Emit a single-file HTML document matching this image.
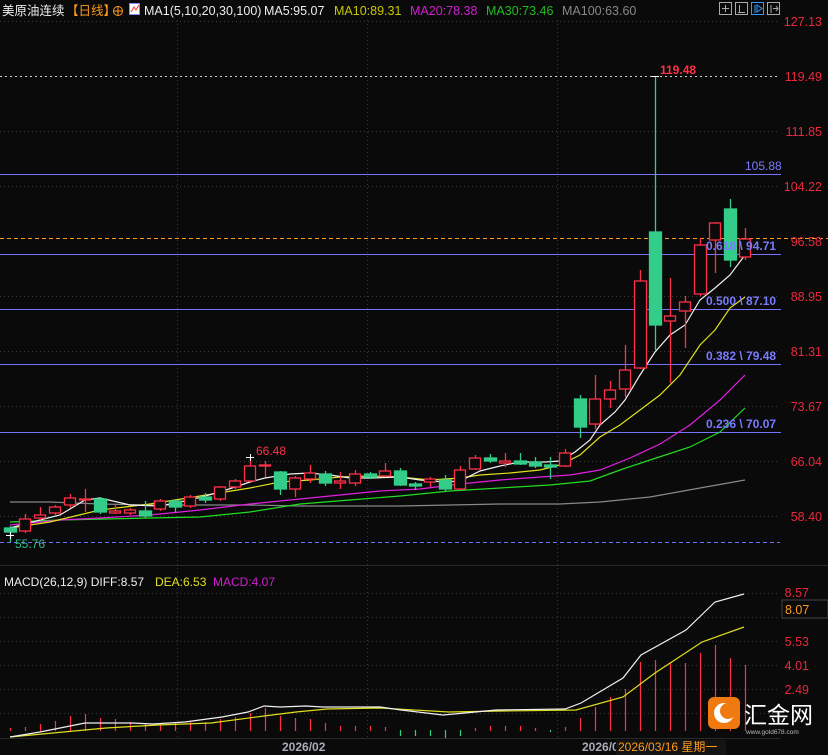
<!DOCTYPE html>
<html><head><meta charset="utf-8"><style>
html,body{margin:0;padding:0;background:#0a0a0a;}
svg{display:block;font-family:"Liberation Sans","Noto Sans CJK SC",sans-serif;}
</style></head><body>
<svg width="828" height="755" viewBox="0 0 828 755" xmlns="http://www.w3.org/2000/svg">
<rect width="828" height="755" fill="#0a0a0a"/>
<!-- grid -->
<g stroke="#3a3a3a" stroke-dasharray="1,3" stroke-width="1">
<line x1="0" y1="21.5" x2="780" y2="21.5"/><line x1="0" y1="131.5" x2="780" y2="131.5"/><line x1="0" y1="186.5" x2="780" y2="186.5"/><line x1="0" y1="296.5" x2="780" y2="296.5"/><line x1="0" y1="351.5" x2="780" y2="351.5"/><line x1="0" y1="406.5" x2="780" y2="406.5"/><line x1="0" y1="461.5" x2="780" y2="461.5"/><line x1="0" y1="516.5" x2="780" y2="516.5"/>
<line x1="0" y1="593.5" x2="780" y2="593.5"/><line x1="0" y1="617.5" x2="780" y2="617.5"/><line x1="0" y1="641.5" x2="780" y2="641.5"/><line x1="0" y1="665.5" x2="780" y2="665.5"/><line x1="0" y1="689.5" x2="780" y2="689.5"/><line x1="0" y1="713.5" x2="780" y2="713.5"/>
<line x1="177.5" y1="20" x2="177.5" y2="738"/><line x1="367.5" y1="20" x2="367.5" y2="738"/><line x1="557.5" y1="20" x2="557.5" y2="738"/>
</g>
<line x1="0" y1="565.5" x2="828" y2="565.5" stroke="#2a2a2a"/>
<line x1="0" y1="738.5" x2="780" y2="738.5" stroke="#2a2a2a"/>
<!-- special lines -->
<line x1="0" y1="76.5" x2="780" y2="76.5" stroke="#cccccc" stroke-dasharray="2,3"/>
<line x1="0" y1="238.5" x2="828" y2="238.5" stroke="#ff9a1a" stroke-dasharray="4,3"/>
<line x1="0" y1="542.5" x2="780" y2="542.5" stroke="#7070ff" stroke-dasharray="4,3"/>
<g stroke="#7474ff" stroke-width="1">
<line x1="0" y1="174.5" x2="781" y2="174.5"/><line x1="0" y1="254.5" x2="781" y2="254.5"/><line x1="0" y1="309.5" x2="781" y2="309.5"/><line x1="0" y1="364.5" x2="781" y2="364.5"/><line x1="0" y1="432.5" x2="781" y2="432.5"/>
</g>
<!-- MA lines -->
<g fill="none" stroke-width="1.2">
<polyline stroke="#888" points="10,502 50,502 100,504 150,505 250,505 300,506 400,506 500,504 560,504 600,502 650,497 700,488 745,480"/>
<polyline stroke="#22dd22" points="10,522 60,520 150,518 200,517 250,512 300,504 350,500 400,496 450,491 500,488 550,485 590,481 620,470 650,460 690,447 720,432 745,408"/>
<polyline stroke="#e020e0" points="10,525 60,520 100,518 150,515 200,510 250,504 290,500 340,495 380,491 420,489 460,484 500,480 540,477 570,475 600,470 630,458 660,444 690,425 720,400 745,375"/>
<polyline stroke="#e0e020" points="10,528 50,522 100,510 150,504 200,496 250,488 280,482 310,480 340,477 370,476 400,477 430,480 460,478 480,475 510,473 540,470 560,465 580,455 600,437 620,425 640,410 660,395 680,375 700,345 715,330 730,308 745,297"/>
<polyline stroke="#f0f0f0" points="10,528 40,520 60,515 85,500 100,498 130,505 160,506 190,500 220,492 250,482 265,478 290,474 310,473 330,475 350,478 370,478 400,477 420,480 445,482 460,481 480,471 500,466 520,462 545,462 560,461 575,452 590,440 600,425 615,412 625,400 640,375 655,352 670,335 685,325 700,300 715,288 730,275 745,255"/>
</g>
<!-- candles -->
<g stroke-width="1.3">
<g stroke="#3c8" fill="#3c8">
<line x1="10.5" y1="526" x2="10.5" y2="542"/><rect x="4.5" y="528" width="12" height="4"/>
<line x1="100.5" y1="497" x2="100.5" y2="514"/><rect x="94.5" y="499" width="12" height="13"/>
<line x1="145.5" y1="501" x2="145.5" y2="518"/><rect x="139.5" y="511" width="12" height="5"/>
<line x1="175.5" y1="499" x2="175.5" y2="512"/><rect x="169.5" y="501" width="12" height="6"/>
<line x1="205.5" y1="493" x2="205.5" y2="503"/><rect x="199.5" y="497" width="12" height="3"/>
<line x1="280.5" y1="471" x2="280.5" y2="495"/><rect x="274.5" y="472" width="12" height="17"/>
<line x1="325.5" y1="471" x2="325.5" y2="486"/><rect x="319.5" y="474" width="12" height="9"/>
<line x1="370.5" y1="472" x2="370.5" y2="479"/><rect x="364.5" y="474" width="12" height="3"/>
<line x1="400.5" y1="468" x2="400.5" y2="486"/><rect x="394.5" y="471" width="12" height="14"/>
<line x1="415.5" y1="482" x2="415.5" y2="490"/><rect x="409.5" y="484" width="12" height="2"/>
<line x1="445.5" y1="475" x2="445.5" y2="492"/><rect x="439.5" y="480" width="12" height="9"/>
<line x1="490.5" y1="454" x2="490.5" y2="463"/><rect x="484.5" y="458" width="12" height="3"/>
<line x1="520.5" y1="453" x2="520.5" y2="465"/><rect x="514.5" y="461" width="12" height="3"/>
<line x1="535.5" y1="457" x2="535.5" y2="468"/><rect x="529.5" y="462" width="12" height="4"/>
<line x1="550.5" y1="457" x2="550.5" y2="479"/><rect x="544.5" y="465" width="12" height="2"/>
<line x1="580.5" y1="395" x2="580.5" y2="438"/><rect x="574.5" y="399" width="12" height="28"/>
<line x1="655.5" y1="76" x2="655.5" y2="350"/><rect x="649.5" y="232" width="12" height="93"/>
<line x1="730.5" y1="199" x2="730.5" y2="267"/><rect x="724.5" y="209" width="12" height="51"/>
</g>
<g stroke="#ff3048" fill="#0a0a0a">
<line x1="25.5" y1="514" x2="25.5" y2="533"/><rect x="19.5" y="519" width="11" height="12"/>
<line x1="40.5" y1="507" x2="40.5" y2="520"/><rect x="34.5" y="515" width="11" height="3"/>
<line x1="55.5" y1="505" x2="55.5" y2="515"/><rect x="49.5" y="507" width="11" height="6"/>
<line x1="70.5" y1="494" x2="70.5" y2="508"/><rect x="64.5" y="498" width="11" height="7"/>
<line x1="85.5" y1="489" x2="85.5" y2="512"/><rect x="79.5" y="499" width="11" height="1"/>
<line x1="115.5" y1="505" x2="115.5" y2="514"/><rect x="109.5" y="511" width="11" height="2"/>
<line x1="130.5" y1="508" x2="130.5" y2="515"/><rect x="124.5" y="510" width="11" height="3"/>
<line x1="160.5" y1="499" x2="160.5" y2="511"/><rect x="154.5" y="501" width="11" height="8"/>
<line x1="190.5" y1="495" x2="190.5" y2="508"/><rect x="184.5" y="497" width="11" height="9"/>
<line x1="220.5" y1="486" x2="220.5" y2="501"/><rect x="214.5" y="487" width="11" height="12"/>
<line x1="235.5" y1="479" x2="235.5" y2="489"/><rect x="229.5" y="481" width="11" height="6"/>
<line x1="250.5" y1="457" x2="250.5" y2="482"/><rect x="244.5" y="466" width="11" height="15"/>
<line x1="265.5" y1="461" x2="265.5" y2="477"/><rect x="259.5" y="465" width="11" height="1"/>
<line x1="295.5" y1="476" x2="295.5" y2="497"/><rect x="289.5" y="478" width="11" height="11"/>
<line x1="310.5" y1="465" x2="310.5" y2="483"/><rect x="304.5" y="473" width="11" height="6"/>
<line x1="340.5" y1="472" x2="340.5" y2="489"/><rect x="334.5" y="481" width="11" height="2"/>
<line x1="355.5" y1="470" x2="355.5" y2="486"/><rect x="349.5" y="474" width="11" height="9"/>
<line x1="385.5" y1="463" x2="385.5" y2="477"/><rect x="379.5" y="471" width="11" height="5"/>
<line x1="430.5" y1="477" x2="430.5" y2="487"/><rect x="424.5" y="479" width="11" height="3"/>
<line x1="460.5" y1="466" x2="460.5" y2="490"/><rect x="454.5" y="470" width="11" height="19"/>
<line x1="475.5" y1="455" x2="475.5" y2="470"/><rect x="469.5" y="458" width="11" height="11"/>
<line x1="505.5" y1="453" x2="505.5" y2="467"/><rect x="499.5" y="461" width="11" height="2"/>
<line x1="565.5" y1="449" x2="565.5" y2="467"/><rect x="559.5" y="453" width="11" height="13"/>
<line x1="595.5" y1="375" x2="595.5" y2="429"/><rect x="589.5" y="399" width="11" height="25"/>
<line x1="610.5" y1="381" x2="610.5" y2="408"/><rect x="604.5" y="390" width="11" height="9"/>
<line x1="625.5" y1="345" x2="625.5" y2="397"/><rect x="619.5" y="370" width="11" height="19"/>
<line x1="640.5" y1="270" x2="640.5" y2="369"/><rect x="634.5" y="281" width="12" height="87"/>
<line x1="670.5" y1="278" x2="670.5" y2="383"/><rect x="664.5" y="316" width="11" height="5"/>
<line x1="685.5" y1="296" x2="685.5" y2="348"/><rect x="679.5" y="302" width="11" height="9"/>
<line x1="700.5" y1="238" x2="700.5" y2="296"/><rect x="694.5" y="245" width="12" height="49"/>
<line x1="715.5" y1="222" x2="715.5" y2="273"/><rect x="709.5" y="223" width="11" height="17"/>
<line x1="745.5" y1="228" x2="745.5" y2="260"/><rect x="739.5" y="239" width="11" height="18"/>
</g>
</g>
<!-- markers -->
<g stroke="#fff"><line x1="246" y1="457.5" x2="254" y2="457.5"/><line x1="250.5" y1="454" x2="250.5" y2="461"/><line x1="6" y1="535.5" x2="14" y2="535.5"/><line x1="10.5" y1="532" x2="10.5" y2="539"/><line x1="652" y1="76.5" x2="659" y2="76.5"/></g>
<text x="256" y="455" fill="#ff3048" font-size="12">66.48</text>
<text x="15" y="548" fill="#33bb88" font-size="12">55.76</text>
<text x="660" y="74" fill="#ff3048" font-size="12" font-weight="bold">119.48</text>
<g fill="#7a7aff" font-size="12" font-weight="bold">
<text x="706" y="250">0.618 \ 94.71</text><text x="706" y="305">0.500 \ 87.10</text><text x="706" y="360">0.382 \ 79.48</text><text x="706" y="428">0.236 \ 70.07</text>
</g>
<text x="745" y="170" fill="#7a7aff" font-size="12">105.88</text>
<!-- right axis -->
<g fill="#e8283c" font-size="12.5" text-anchor="end">
<text x="822" y="26">127.13</text><text x="822" y="81">119.49</text><text x="822" y="136">111.85</text><text x="822" y="191">104.22</text><text x="822" y="246">96.58</text><text x="822" y="301">88.95</text><text x="822" y="356">81.31</text><text x="822" y="411">73.67</text><text x="822" y="466">66.04</text><text x="822" y="521">58.40</text>
<text x="809" y="597">8.57</text><text x="809" y="646">5.53</text><text x="809" y="670">4.01</text><text x="809" y="694">2.49</text>
</g>
<rect x="782" y="600" width="46" height="18" fill="#0a0a0a" stroke="#444"/>
<text x="785" y="614" fill="#ff9a1a" font-size="12.5">8.07</text>
<!-- header -->
<g font-size="12.5">
<text x="2" y="15" fill="#eee">美原油连续</text>
<text x="66" y="15" fill="#ff9a1a">【日线】</text>
<circle cx="118" cy="11" r="4.5" fill="none" stroke="#ff9a1a"/><line x1="113" y1="11" x2="123" y2="11" stroke="#ff9a1a"/><line x1="118" y1="6" x2="118" y2="16" stroke="#ff9a1a"/>
<rect x="129.5" y="3.5" width="10" height="11" fill="#fff" stroke="#88f"/><polyline points="131,12 134,7 136,10 139,5" fill="none" stroke="#f33"/>
<text x="144" y="15" fill="#eee">MA1(5,10,20,30,100)</text>
<text x="264" y="15" fill="#eee">MA5:95.07</text>
<text x="334" y="15" fill="#c8c800">MA10:89.31</text>
<text x="410" y="15" fill="#d020d0">MA20:78.38</text>
<text x="486" y="15" fill="#22bb22">MA30:73.46</text>
<text x="562" y="15" fill="#888">MA100:63.60</text>
</g>
<g fill="none" stroke="#aaa">
<rect x="719.5" y="2.5" width="12" height="12"/><rect x="735.5" y="2.5" width="12" height="12"/><rect x="751.5" y="2.5" width="12" height="12" stroke="#39f"/><rect x="767.5" y="2.5" width="12" height="12"/>
<line x1="725.5" y1="5" x2="725.5" y2="12"/><line x1="722" y1="8.5" x2="729" y2="8.5"/>
<line x1="739.5" y1="5" x2="739.5" y2="12"/><line x1="738" y1="12.5" x2="745" y2="12.5"/>
<path d="M755 5v8M757 5l5 3.5-5 3.5z" stroke="#39f"/>
<path d="M771 5v8M773 8.5h5M776 6l2 2.5-2 2.5"/>
</g>
<!-- MACD -->
<g font-size="12">
<text x="4" y="586" fill="#eee">MACD(26,12,9) DIFF:8.57</text>
<text x="155" y="586" fill="#e0e020">DEA:6.53</text>
<text x="213" y="586" fill="#d020d0">MACD:4.07</text>
</g>
<g stroke="#ff3048" stroke-width="1.2">
<line x1="10.5" y1="731" x2="10.5" y2="728"/><line x1="25.5" y1="731" x2="25.5" y2="727"/><line x1="40.5" y1="731" x2="40.5" y2="724"/><line x1="55.5" y1="731" x2="55.5" y2="721"/><line x1="70.5" y1="731" x2="70.5" y2="716"/><line x1="85.5" y1="731" x2="85.5" y2="714"/><line x1="100.5" y1="731" x2="100.5" y2="718"/><line x1="115.5" y1="731" x2="115.5" y2="719"/><line x1="130.5" y1="731" x2="130.5" y2="722"/><line x1="145.5" y1="731" x2="145.5" y2="723"/><line x1="160.5" y1="731" x2="160.5" y2="723"/><line x1="175.5" y1="731" x2="175.5" y2="723"/><line x1="190.5" y1="731" x2="190.5" y2="722"/><line x1="205.5" y1="731" x2="205.5" y2="722"/><line x1="220.5" y1="731" x2="220.5" y2="719"/><line x1="235.5" y1="731" x2="235.5" y2="717"/><line x1="250.5" y1="731" x2="250.5" y2="713"/><line x1="265.5" y1="731" x2="265.5" y2="708"/><line x1="280.5" y1="731" x2="280.5" y2="716"/><line x1="295.5" y1="731" x2="295.5" y2="718"/><line x1="310.5" y1="731" x2="310.5" y2="719"/><line x1="325.5" y1="731" x2="325.5" y2="723"/><line x1="340.5" y1="731" x2="340.5" y2="726"/><line x1="355.5" y1="731" x2="355.5" y2="726"/><line x1="370.5" y1="731" x2="370.5" y2="726"/><line x1="385.5" y1="731" x2="385.5" y2="727"/>
<line x1="475.5" y1="731" x2="475.5" y2="728"/><line x1="490.5" y1="731" x2="490.5" y2="726"/><line x1="505.5" y1="731" x2="505.5" y2="726"/><line x1="520.5" y1="731" x2="520.5" y2="726"/><line x1="535.5" y1="731" x2="535.5" y2="728"/><line x1="565.5" y1="731" x2="565.5" y2="727"/>
<line x1="580.5" y1="731" x2="580.5" y2="718"/><line x1="595.5" y1="731" x2="595.5" y2="707"/><line x1="610.5" y1="731" x2="610.5" y2="697"/><line x1="625.5" y1="731" x2="625.5" y2="689"/><line x1="640.5" y1="731" x2="640.5" y2="662"/><line x1="655.5" y1="731" x2="655.5" y2="660"/><line x1="670.5" y1="731" x2="670.5" y2="662"/><line x1="685.5" y1="731" x2="685.5" y2="663"/><line x1="700.5" y1="731" x2="700.5" y2="653"/><line x1="715.5" y1="731" x2="715.5" y2="645"/><line x1="730.5" y1="731" x2="730.5" y2="658"/><line x1="745.5" y1="731" x2="745.5" y2="665"/>
</g>
<g stroke="#33cc88" stroke-width="1.2">
<line x1="400.5" y1="730" x2="400.5" y2="736"/><line x1="415.5" y1="730" x2="415.5" y2="736"/><line x1="430.5" y1="730" x2="430.5" y2="736"/><line x1="445.5" y1="730" x2="445.5" y2="738"/><line x1="460.5" y1="730" x2="460.5" y2="736"/><line x1="550.5" y1="730" x2="550.5" y2="732"/>
</g>
<polyline fill="none" stroke="#e0e020" stroke-width="1.2" points="10,737 53,733 106,728 158,725 211,723 264,716 296,712 327,709 380,708 449,712 502,711 576,710 623,697 655,673 702,642 744,627"/>
<polyline fill="none" stroke="#f0f0f0" stroke-width="1.2" points="10,737 40,732 85,723 132,723 153,724 185,722 222,717 248,712 264,706 280,707 306,706 322,707 380,707 401,710 443,715 465,713 496,710 565,709 581,703 623,678 641,655 686,630 715,602 744,594"/>
<!-- date axis -->
<text x="282" y="751" fill="#aab" font-size="12" font-weight="bold">2026/02</text>
<text x="582" y="751" fill="#aab" font-size="12" font-weight="bold">2026/0</text>
<rect x="616" y="740" width="110" height="15" fill="#141414"/>
<text x="618" y="751" fill="#ff9a1a" font-size="12">2026/03/16 星期一</text>
<!-- logo -->
<rect x="708" y="697" width="32" height="32" rx="6" fill="#f07a10"/>
<circle cx="724" cy="713" r="10" fill="#fff"/><circle cx="728" cy="711" r="8" fill="#f07a10"/>
<text x="744" y="723" fill="#fff" font-size="23" font-family="Noto Sans CJK SC,sans-serif">汇金网</text>
<text x="746" y="734" fill="#bbb" font-size="6.5">www.gold678.com</text>
</svg>
</body></html>
